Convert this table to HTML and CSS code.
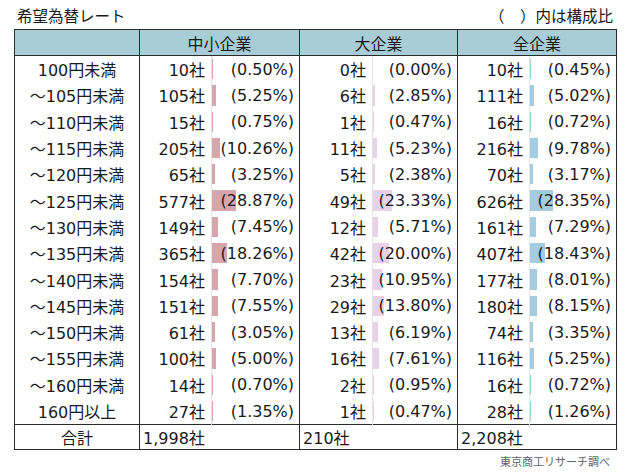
FILE: index.html
```html
<!DOCTYPE html>
<html lang="ja">
<head>
<meta charset="utf-8">
<link rel="stylesheet" href="styles.css">
</head>
<body>
<div class="page">
  <div class="top">
    <span class="title">希望為替レート</span>
    <span class="note">（　）内は構成比</span>
  </div>
  <table class="rates">
    <colgroup>
      <col class="c-label"><col class="c-n1"><col class="c-p1"><col class="c-n2"><col class="c-p2"><col class="c-n3"><col class="c-p3">
    </colgroup>
    <thead>
      <tr><th></th><th colspan="2">中小企業</th><th colspan="2">大企業</th><th colspan="2">全企業</th></tr>
    </thead>
    <tbody>
      <tr><td class="label">100円未満</td><td class="n">10社</td><td class="p"><span class="bar sme" style="width:0.4px"></span><span class="pt">(0.50%)</span></td><td class="n">0社</td><td class="p"><span class="bar big" style="width:0px"></span><span class="pt">(0.00%)</span></td><td class="n">10社</td><td class="p"><span class="bar all" style="width:0.4px"></span><span class="pt">(0.45%)</span></td></tr>
      <tr><td class="label">～105円未満</td><td class="n">105社</td><td class="p"><span class="bar sme" style="width:4.3px"></span><span class="pt">(5.25%)</span></td><td class="n">6社</td><td class="p"><span class="bar big" style="width:2.3px"></span><span class="pt">(2.85%)</span></td><td class="n">111社</td><td class="p"><span class="bar all" style="width:4.1px"></span><span class="pt">(5.02%)</span></td></tr>
      <tr><td class="label">～110円未満</td><td class="n">15社</td><td class="p"><span class="bar sme" style="width:0.6px"></span><span class="pt">(0.75%)</span></td><td class="n">1社</td><td class="p"><span class="bar big" style="width:0.4px"></span><span class="pt">(0.47%)</span></td><td class="n">16社</td><td class="p"><span class="bar all" style="width:0.6px"></span><span class="pt">(0.72%)</span></td></tr>
      <tr><td class="label">～115円未満</td><td class="n">205社</td><td class="p"><span class="bar sme" style="width:8.4px"></span><span class="pt">(10.26%)</span></td><td class="n">11社</td><td class="p"><span class="bar big" style="width:4.3px"></span><span class="pt">(5.23%)</span></td><td class="n">216社</td><td class="p"><span class="bar all" style="width:8.0px"></span><span class="pt">(9.78%)</span></td></tr>
      <tr><td class="label">～120円未満</td><td class="n">65社</td><td class="p"><span class="bar sme" style="width:2.7px"></span><span class="pt">(3.25%)</span></td><td class="n">5社</td><td class="p"><span class="bar big" style="width:2.0px"></span><span class="pt">(2.38%)</span></td><td class="n">70社</td><td class="p"><span class="bar all" style="width:2.6px"></span><span class="pt">(3.17%)</span></td></tr>
      <tr><td class="label">～125円未満</td><td class="n">577社</td><td class="p"><span class="bar sme" style="width:23.7px"></span><span class="pt">(28.87%)</span></td><td class="n">49社</td><td class="p"><span class="bar big" style="width:19.1px"></span><span class="pt">(23.33%)</span></td><td class="n">626社</td><td class="p"><span class="bar all" style="width:23.2px"></span><span class="pt">(28.35%)</span></td></tr>
      <tr><td class="label">～130円未満</td><td class="n">149社</td><td class="p"><span class="bar sme" style="width:6.1px"></span><span class="pt">(7.45%)</span></td><td class="n">12社</td><td class="p"><span class="bar big" style="width:4.7px"></span><span class="pt">(5.71%)</span></td><td class="n">161社</td><td class="p"><span class="bar all" style="width:6.0px"></span><span class="pt">(7.29%)</span></td></tr>
      <tr><td class="label">～135円未満</td><td class="n">365社</td><td class="p"><span class="bar sme" style="width:15.0px"></span><span class="pt">(18.26%)</span></td><td class="n">42社</td><td class="p"><span class="bar big" style="width:16.4px"></span><span class="pt">(20.00%)</span></td><td class="n">407社</td><td class="p"><span class="bar all" style="width:15.1px"></span><span class="pt">(18.43%)</span></td></tr>
      <tr><td class="label">～140円未満</td><td class="n">154社</td><td class="p"><span class="bar sme" style="width:6.3px"></span><span class="pt">(7.70%)</span></td><td class="n">23社</td><td class="p"><span class="bar big" style="width:9.0px"></span><span class="pt">(10.95%)</span></td><td class="n">177社</td><td class="p"><span class="bar all" style="width:6.6px"></span><span class="pt">(8.01%)</span></td></tr>
      <tr><td class="label">～145円未満</td><td class="n">151社</td><td class="p"><span class="bar sme" style="width:6.2px"></span><span class="pt">(7.55%)</span></td><td class="n">29社</td><td class="p"><span class="bar big" style="width:11.3px"></span><span class="pt">(13.80%)</span></td><td class="n">180社</td><td class="p"><span class="bar all" style="width:6.7px"></span><span class="pt">(8.15%)</span></td></tr>
      <tr><td class="label">～150円未満</td><td class="n">61社</td><td class="p"><span class="bar sme" style="width:2.5px"></span><span class="pt">(3.05%)</span></td><td class="n">13社</td><td class="p"><span class="bar big" style="width:5.1px"></span><span class="pt">(6.19%)</span></td><td class="n">74社</td><td class="p"><span class="bar all" style="width:2.7px"></span><span class="pt">(3.35%)</span></td></tr>
      <tr><td class="label">～155円未満</td><td class="n">100社</td><td class="p"><span class="bar sme" style="width:4.1px"></span><span class="pt">(5.00%)</span></td><td class="n">16社</td><td class="p"><span class="bar big" style="width:6.2px"></span><span class="pt">(7.61%)</span></td><td class="n">116社</td><td class="p"><span class="bar all" style="width:4.3px"></span><span class="pt">(5.25%)</span></td></tr>
      <tr><td class="label">～160円未満</td><td class="n">14社</td><td class="p"><span class="bar sme" style="width:0.6px"></span><span class="pt">(0.70%)</span></td><td class="n">2社</td><td class="p"><span class="bar big" style="width:0.8px"></span><span class="pt">(0.95%)</span></td><td class="n">16社</td><td class="p"><span class="bar all" style="width:0.6px"></span><span class="pt">(0.72%)</span></td></tr>
      <tr><td class="label">160円以上</td><td class="n">27社</td><td class="p"><span class="bar sme" style="width:1.1px"></span><span class="pt">(1.35%)</span></td><td class="n">1社</td><td class="p"><span class="bar big" style="width:0.4px"></span><span class="pt">(0.47%)</span></td><td class="n">28社</td><td class="p"><span class="bar all" style="width:1.0px"></span><span class="pt">(1.26%)</span></td></tr>
    </tbody>
    <tfoot>
      <tr><td class="label">合計</td><td class="tot" colspan="2">1,998社</td><td class="tot" colspan="2">210社</td><td class="tot" colspan="2">2,208社</td></tr>
    </tfoot>
  </table>
  <div class="source">東京商工リサーチ調べ</div>
</div>
</body>
</html>
```
FILE: styles.css
```css
html, body {
  margin: 0;
  padding: 0;
  background: #ffffff;
}
body {
  font-family: "DejaVu Sans", "Noto Sans CJK JP", sans-serif;
  color: #1a1a1a;
}
.page {
  width: 631px;
  height: 475px;
  padding: 5px 0 0 14px;
  box-sizing: border-box;
}
.top {
  display: flex;
  justify-content: space-between;
  align-items: center;
  width: 602px;
  height: 24px;
  margin-top: -2px;
  margin-bottom: 2px;
  font-family: "Noto Sans CJK JP", sans-serif;
  font-size: 15.5px;
}
.title {
  padding-left: 3px;
}
.note {
  padding-right: 3px;
}
.rates {
  border-collapse: collapse;
  table-layout: fixed;
  width: 602px;
  border: 1.5px solid #2b2b2b;
  font-size: 16px;
}
.c-label { width: 125px; }
.c-n1 { width: 72px; }
.c-p1 { width: 88px; }
.c-n2 { width: 73px; }
.c-p2 { width: 85px; }
.c-n3 { width: 72px; }
.c-p3 { width: 87px; }
.rates th {
  background: #a9cdd7;
  height: 25px;
  padding: 0;
  font-weight: normal;
  font-family: "Noto Sans CJK JP", sans-serif;
  font-size: 16px;
  border-left: 1px solid #2b2b2b;
  border-bottom: 1.5px solid #2b2b2b;
  text-align: center;
}
.rates td {
  height: 26.3px;
  padding: 0;
  white-space: nowrap;
}
.rates td.label {
  text-align: center;
}
.rates td.n {
  text-align: right;
  padding-right: 6px;
  border-left: 1px solid #2b2b2b;
}
.rates td.p {
  position: relative;
  text-align: right;
  padding-right: 5px;
  border-left: 1px solid #e4e4e4;
}
.bar {
  position: absolute;
  left: 0;
  top: 3px;
  bottom: 3px;
}
.bar.sme { background: #d7a6ab; }
.bar.big { background: #e9d1e9; }
.bar.all { background: #a4cce0; }
.pt {
  position: relative;
}
.rates tfoot td {
  height: 24px;
  border-top: 1.5px solid #2b2b2b;
}
.rates td.tot {
  text-align: left;
  padding-left: 3px;
  border-left: 1px solid #2b2b2b;
}
.source {
  width: 602px;
  text-align: right;
  font-family: "Noto Sans CJK JP", sans-serif;
  font-size: 11px;
  color: #5a6070;
  padding-top: 3px;
  padding-right: 6px;
  box-sizing: border-box;
}
```
